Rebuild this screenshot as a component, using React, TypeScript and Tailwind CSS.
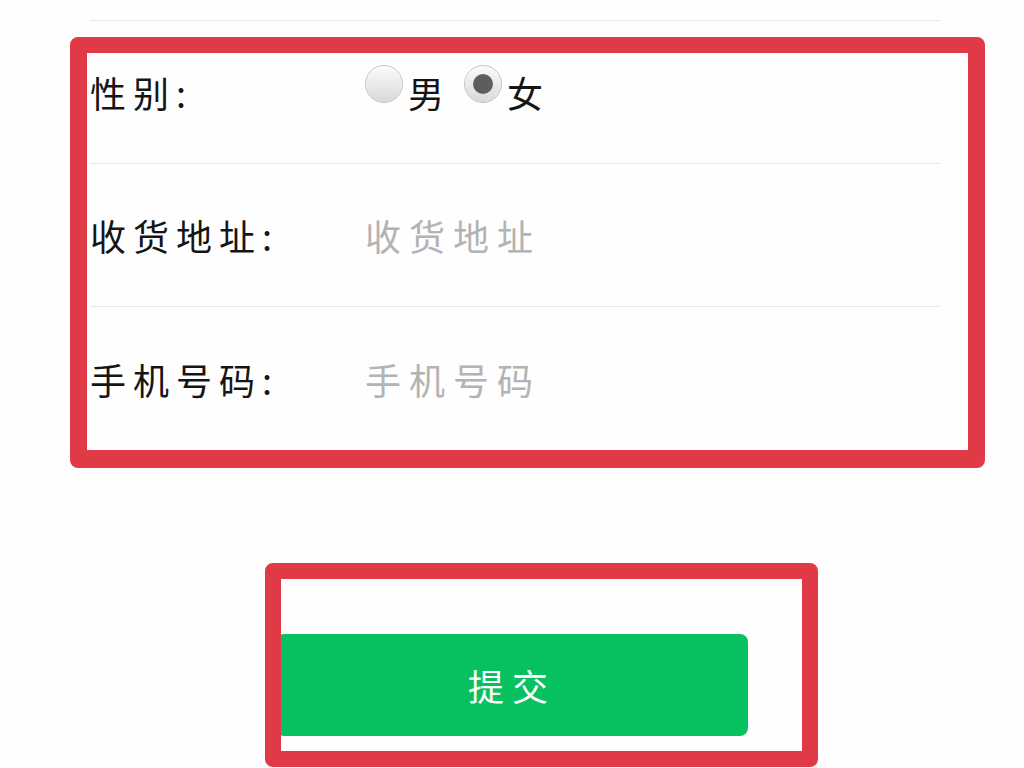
import React, { FC } from 'react';

const font = { fontFamily: '"Noto Sans CJK SC", "Noto Sans", sans-serif' };

interface RadioProps {
  label: string;
  checked?: boolean;
}

const Radio: FC<RadioProps> = ({ label, checked }) => (
  <label className="flex items-center">
    <span className="relative -mt-[16px] flex h-[38px] w-[38px] items-center justify-center rounded-full border border-[#c4c4c4] bg-gradient-to-b from-[#fbfbfb] to-[#d9d9d9] shadow-[inset_0_1px_2px_rgba(255,255,255,0.9)]">
      {checked && <span className="h-[20px] w-[20px] rounded-full bg-[#5d5d5d]" />}
    </span>
    <span className="ml-[5px] text-[36px] leading-none text-[#151515]">{label}</span>
  </label>
);

interface RowProps {
  label: string;
  last?: boolean;
  children: React.ReactNode;
}

const Row: FC<RowProps> = ({ label, last, children }) => (
  <div className={`flex h-[143px] items-center ${last ? '' : 'border-b border-[#e6e6e6]'}`}>
    <div className="w-[275px] text-[36px] leading-none tracking-[7px] text-[#151515]">{label}</div>
    <div className="flex flex-1 items-center">{children}</div>
  </div>
);

const App: FC = () => {
  return (
    <div className="relative h-[768px] w-[1024px] overflow-hidden bg-[#fefefe]" style={font}>
      <div className="mx-[90px] w-[850px]">
        <div className="h-[21px] border-b border-[#e6e6e6]" />
        <Row label="性别:">
          <div className="flex items-center gap-[20px]">
            <Radio label="男" />
            <Radio label="女" checked />
          </div>
        </Row>
        <Row label="收货地址:">
          <span className="text-[36px] leading-none tracking-[8px] text-[#b3b3b3]">收货地址</span>
        </Row>
        <Row label="手机号码:" last>
          <span className="text-[36px] leading-none tracking-[8px] text-[#b3b3b3]">手机号码</span>
        </Row>
      </div>

      <div className="mt-[184px] flex justify-center">
        <button className="h-[102px] w-[472px] rounded-[8px] bg-[#07c160] text-[36px] tracking-[8px] text-white">
          提交
        </button>
      </div>

      {/* annotation boxes */}
      <div className="pointer-events-none absolute left-[70px] top-[37px] h-[431px] w-[915px] rounded-[8px] border-x-[17px] border-t-[16px] border-b-[18px] border-[#e03a46]" />
      <div className="pointer-events-none absolute left-[265px] top-[563px] h-[204px] w-[553px] rounded-[8px] border-[16px] border-[#e03a46]" />
    </div>
  );
};

export default App;
